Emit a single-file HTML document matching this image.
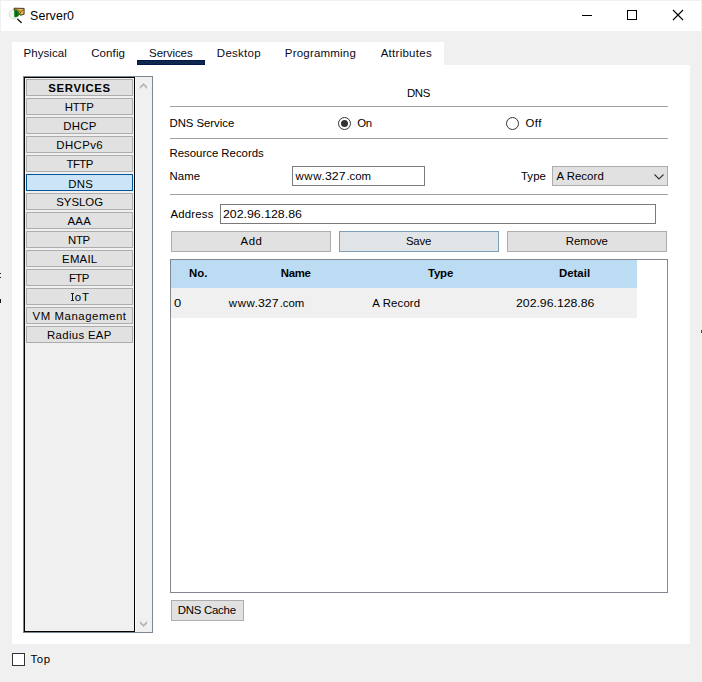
<!DOCTYPE html>
<html>
<head>
<meta charset="utf-8">
<title>Server0</title>
<style>
html,body{margin:0;padding:0;}
body{width:702px;height:682px;position:relative;overflow:hidden;background:#f0f0f0;
  font-family:"Liberation Sans",sans-serif;font-size:11.4px;color:#000;line-height:13px;}
.a{position:absolute;}
.t{position:absolute;white-space:nowrap;}
#titlebar{left:1px;top:1px;width:700px;height:30px;background:#fff;}
#pane{left:12px;top:65px;width:678px;height:579px;background:#fff;}
#tabs{left:12px;top:42px;width:432px;height:23px;background:#fff;}
#uline{left:137px;top:60px;width:66px;height:3px;background:#0d274d;border:1px solid #05174a;}
#sbouter{left:23px;top:76px;width:128px;height:555px;border:1px solid #7f8792;background:#f0f0f0;}
#sblist{left:24px;top:77px;width:109px;height:553px;border:1px solid #000;background:#f0f0f0;}
#sbgap{left:135px;top:77px;width:1px;height:555px;background:#fbfbfb;}
.sb{position:absolute;left:26px;width:105px;height:15px;border:1px solid #adadad;background:#e1e1e1;}
.sb.sel{border-color:#005499;background:#cce4f7;}
.hl{position:absolute;left:170px;width:498px;height:1px;background:#a0a0a0;}
.inp{position:absolute;box-sizing:border-box;border:1px solid #7a7a7a;background:#fff;height:20px;}
.btn{position:absolute;box-sizing:border-box;border:1px solid #adadad;background:#e1e1e1;height:21px;}
.radio{position:absolute;box-sizing:border-box;width:13px;height:13px;border:1px solid #333;border-radius:50%;background:#fff;}
.radio.on:after{content:"";position:absolute;left:2px;top:2px;width:7px;height:7px;border-radius:50%;background:#333;}
#table{left:170px;top:259px;width:496px;height:332px;border:1px solid #828790;background:#fff;}
#thead{left:171px;top:260px;width:466px;height:28px;background:#bcdcf4;}
#trow{left:171px;top:288px;width:466px;height:30px;background:#f0f0f0;}
</style>
</head>
<body>
<!-- title bar -->
<div class="a" id="titlebar"></div>
<svg class="a" style="left:8px;top:6px" width="18" height="18" viewBox="0 0 18 18">
  <circle cx="5.7" cy="8.4" r="4.6" fill="#f3f3f3" stroke="#d9d9d9" stroke-width="0.9"/>
  <path d="M6.1 2.2 L16.1 2.4 L16.1 8.3 L12.4 9.3 L11.6 8.3 L9.5 5 L7.9 4 L6.1 4 Z" fill="#e6b84c" stroke="#1a1405" stroke-width="0.8" stroke-linejoin="round"/>
  <path d="M8.3 3.2 L12.4 5.8 L15.7 3.8 M12.4 5.8 L12.2 8.8" stroke="#5a4310" stroke-width="0.7" fill="none"/>
  <path d="M6.2 4 L7.9 4 L9.75 5.2 L11.6 8.3 L10.4 10.2 L7.1 11.5 L6.2 10.8 Z" fill="#0c8210"/>
  <path d="M7.3 5 L8.8 5.6 L9.6 9.4 L8 10.3 Z" fill="#075c0a"/>
  <path d="M9.7 13.3 L13.2 16.5" stroke="#111" stroke-width="1.3" stroke-linecap="round"/>
</svg>
<!-- window controls -->
<div class="a" style="left:582px;top:15px;width:10px;height:1px;background:#000"></div>
<div class="a" style="left:627px;top:10px;width:8px;height:8px;border:1px solid #000"></div>
<svg class="a" style="left:672px;top:9px" width="12" height="12" viewBox="0 0 12 12"><path d="M1 1 L11 11 M11 1 L1 11" stroke="#000" stroke-width="1.1" fill="none"/></svg>

<!-- tabs -->
<div class="a" id="tabs"></div>
<div class="a" id="pane"></div>
<div class="a" id="uline"></div>

<!-- sidebar -->
<div class="a" id="sbouter"></div>
<div class="a" id="sblist"></div>
<div class="a" id="sbgap"></div>
<div class="sb" style="top:79px"></div>
<div class="sb" style="top:98px"></div>
<div class="sb" style="top:117px"></div>
<div class="sb" style="top:136px"></div>
<div class="sb" style="top:155px"></div>
<div class="sb sel" style="top:174px"></div>
<div class="sb" style="top:193px"></div>
<div class="sb" style="top:212px"></div>
<div class="sb" style="top:231px"></div>
<div class="sb" style="top:250px"></div>
<div class="sb" style="top:269px"></div>
<div class="sb" style="top:288px"></div>
<div class="sb" style="top:307px"></div>
<div class="sb" style="top:326px"></div>
<svg class="a" style="left:139px;top:82px" width="10" height="8" viewBox="0 0 10 8"><path d="M4.5 1 L8.1 4.6 L8.1 7 L4.5 3.5 L0.9 7 L0.9 4.6 Z" fill="#b6b6b6"/></svg>
<svg class="a" style="left:139px;top:620px" width="10" height="8" viewBox="0 0 10 8"><path d="M0.9 1 L4.5 4.5 L8.1 1 L8.1 3.4 L4.5 7 L0.9 3.4 Z" fill="#b6b6b6"/></svg>

<!-- main form -->
<div class="hl" style="top:106px"></div>
<div class="radio on" style="left:338px;top:117px"></div>
<div class="radio" style="left:506px;top:117px"></div>
<div class="hl" style="top:138px"></div>
<div class="inp" style="left:292px;top:166px;width:133px"></div>
<div class="inp" style="left:552px;top:166px;width:116px;border-color:#adadad;background:#e1e1e1"></div>
<svg class="a" style="left:653px;top:173px" width="12" height="8" viewBox="0 0 12 8"><path d="M1.5 1.5 L6 6 L10.5 1.5" stroke="#333" stroke-width="1.1" fill="none"/></svg>
<div class="hl" style="top:194px"></div>
<div class="inp" style="left:220px;top:204px;width:436px"></div>
<div class="btn" style="left:171px;top:231px;width:160px"></div>
<div class="btn" style="left:339px;top:231px;width:160px;border-color:#7e9fb8;background:#e2e5e8"></div>
<div class="btn" style="left:507px;top:231px;width:160px"></div>

<!-- table -->
<div class="a" id="table"></div>
<div class="a" id="thead"></div>
<div class="a" id="trow"></div>
<div class="btn" style="left:171px;top:600px;width:73px"></div>

<!-- footer -->
<div class="a" style="left:12px;top:653px;width:11px;height:11px;border:1px solid #333;background:#fff"></div>

<!-- serifed I of IoT -->
<div class="a" style="left:72px;top:293px;width:1.3px;height:8px;background:#111"></div>
<div class="a" style="left:71px;top:293px;width:3.2px;height:1px;background:#222"></div>
<div class="a" style="left:71px;top:300px;width:3.2px;height:1px;background:#222"></div>
<!-- stray edge pixels -->
<div class="a" style="left:0;top:273px;width:1px;height:1px;background:#222"></div>
<div class="a" style="left:0;top:277px;width:1px;height:1px;background:#222"></div>
<div class="a" style="left:0;top:299px;width:1px;height:4px;background:#1a1a1a"></div>
<div class="a" style="left:701px;top:330px;width:1px;height:3px;background:#e00"></div>

<!-- text -->
<span class="t" style="left:30.07px;top:9px;font-size:12.4px;letter-spacing:0.092px;line-height:14px;color:#000">Server0</span>
<span class="t" style="left:23.45px;top:47px;font-size:11.5px;letter-spacing:0.089px;color:#0b0b20">Physical</span>
<span class="t" style="left:91.18px;top:47px;font-size:11.5px;letter-spacing:0.105px;color:#0b0b20">Config</span>
<span class="t" style="left:149.10px;top:47px;font-size:11.5px;letter-spacing:-0.075px;color:#0b0b20">Services</span>
<span class="t" style="left:216.80px;top:47px;font-size:11.5px;letter-spacing:0.275px;color:#0b0b20">Desktop</span>
<span class="t" style="left:284.80px;top:47px;font-size:11.5px;letter-spacing:0.205px;color:#0b0b20">Programming</span>
<span class="t" style="left:380.70px;top:47px;font-size:11.5px;letter-spacing:0.264px;color:#0b0b20">Attributes</span>
<span class="t" style="left:406.92px;top:87px;font-size:11.4px;letter-spacing:-0.362px;">DNS</span>
<span class="t" style="left:169.53px;top:117px;font-size:11.4px;letter-spacing:-0.048px;">DNS Service</span>
<span class="t" style="left:357.20px;top:117px;font-size:11.4px;letter-spacing:-0.200px;">On</span>
<span class="t" style="left:525.40px;top:117px;font-size:11.4px;letter-spacing:0.500px;">Off</span>
<span class="t" style="left:169.53px;top:147px;font-size:11.4px;letter-spacing:-0.007px;">Resource Records</span>
<span class="t" style="left:169.53px;top:170px;font-size:11.4px;letter-spacing:0.033px;">Name</span>
<span class="t" style="left:295.50px;top:170px;font-size:11.4px;letter-spacing:0.617px;">www.</span>
<span class="t" style="left:325.16px;top:170px;font-size:11.4px;transform:scaleX(1.0797);transform-origin:0 0;">327</span>
<span class="t" style="left:346.45px;top:170px;font-size:11.4px;letter-spacing:-0.008px;">.com</span>
<span class="t" style="left:520.95px;top:170px;font-size:11.4px;letter-spacing:0.108px;">Type</span>
<span class="t" style="left:556.40px;top:170px;font-size:11.4px;letter-spacing:0.068px;">A Record</span>
<span class="t" style="left:170.40px;top:208px;font-size:11.4px;letter-spacing:0.204px;">Address</span>
<span class="t" style="left:223.12px;top:208px;font-size:11.4px;transform:scaleX(1.0829);transform-origin:0 0;">202.96.128.86</span>
<span class="t" style="left:240.60px;top:235px;font-size:11.4px;letter-spacing:0.500px;">Add</span>
<span class="t" style="left:405.90px;top:235px;font-size:11.4px;letter-spacing:-0.167px;">Save</span>
<span class="t" style="left:565.82px;top:235px;font-size:11.4px;letter-spacing:-0.060px;">Remove</span>
<span class="t" style="left:189.05px;top:267px;font-size:11.4px;letter-spacing:0.062px;font-weight:bold;color:#000">No.</span>
<span class="t" style="left:280.85px;top:267px;font-size:11.4px;letter-spacing:-0.325px;font-weight:bold;color:#000">Name</span>
<span class="t" style="left:427.97px;top:267px;font-size:11.4px;letter-spacing:-0.150px;font-weight:bold;color:#000">Type</span>
<span class="t" style="left:558.95px;top:267px;font-size:11.4px;letter-spacing:0.020px;font-weight:bold;color:#000">Detail</span>
<span class="t" style="left:173.93px;top:297px;font-size:11.4px;transform:scaleX(1.1349);transform-origin:0 0;">0</span>
<span class="t" style="left:228.80px;top:297px;font-size:11.4px;letter-spacing:0.617px;">www.</span>
<span class="t" style="left:258.46px;top:297px;font-size:11.4px;transform:scaleX(1.0797);transform-origin:0 0;">327</span>
<span class="t" style="left:279.75px;top:297px;font-size:11.4px;letter-spacing:-0.042px;">.com</span>
<span class="t" style="left:372.30px;top:297px;font-size:11.4px;letter-spacing:0.139px;">A Record</span>
<span class="t" style="left:516.43px;top:297px;font-size:11.4px;transform:scaleX(1.0760);transform-origin:0 0;">202.96.128.86</span>
<span class="t" style="left:177.72px;top:604px;font-size:11.4px;letter-spacing:-0.231px;">DNS Cache</span>
<span class="t" style="left:30.45px;top:653px;font-size:11.4px;letter-spacing:0.588px;">Top</span>
<span class="t" style="left:48.32px;top:81.5px;font-size:11.4px;letter-spacing:0.639px;font-weight:bold;color:#000">SERVICES</span>
<span class="t" style="left:64.73px;top:100.5px;font-size:11.4px;letter-spacing:-0.183px;color:#000">HTTP</span>
<span class="t" style="left:63.23px;top:119.5px;font-size:11.4px;letter-spacing:0.250px;color:#000">DHCP</span>
<span class="t" style="left:56.32px;top:138.5px;font-size:11.4px;letter-spacing:0.405px;color:#000">DHCPv6</span>
<span class="t" style="left:66.45px;top:157.5px;font-size:11.4px;letter-spacing:-0.508px;color:#000">TFTP</span>
<span class="t" style="left:68.33px;top:177.5px;font-size:11.4px;letter-spacing:0.187px;color:#000">DNS</span>
<span class="t" style="left:56.20px;top:195.5px;font-size:11.4px;color:#000">SYSLOG</span>
<span class="t" style="left:67.60px;top:214.5px;font-size:11.4px;letter-spacing:0.175px;color:#000">AAA</span>
<span class="t" style="left:68.12px;top:233.5px;font-size:11.4px;letter-spacing:-0.425px;color:#000">NTP</span>
<span class="t" style="left:62.12px;top:252.5px;font-size:11.4px;letter-spacing:0.206px;color:#000">EMAIL</span>
<span class="t" style="left:69.03px;top:271.5px;font-size:11.4px;letter-spacing:-0.600px;color:#000">FTP</span>
<span class="t" style="left:74.80px;top:290.5px;font-size:11.4px;letter-spacing:0.900px;color:#000">oT</span>
<span class="t" style="left:32.48px;top:309.5px;font-size:11.4px;letter-spacing:0.567px;color:#000">VM Management</span>
<span class="t" style="left:47.02px;top:328.5px;font-size:11.4px;letter-spacing:0.325px;color:#000">Radius EAP</span>
</body>
</html>
